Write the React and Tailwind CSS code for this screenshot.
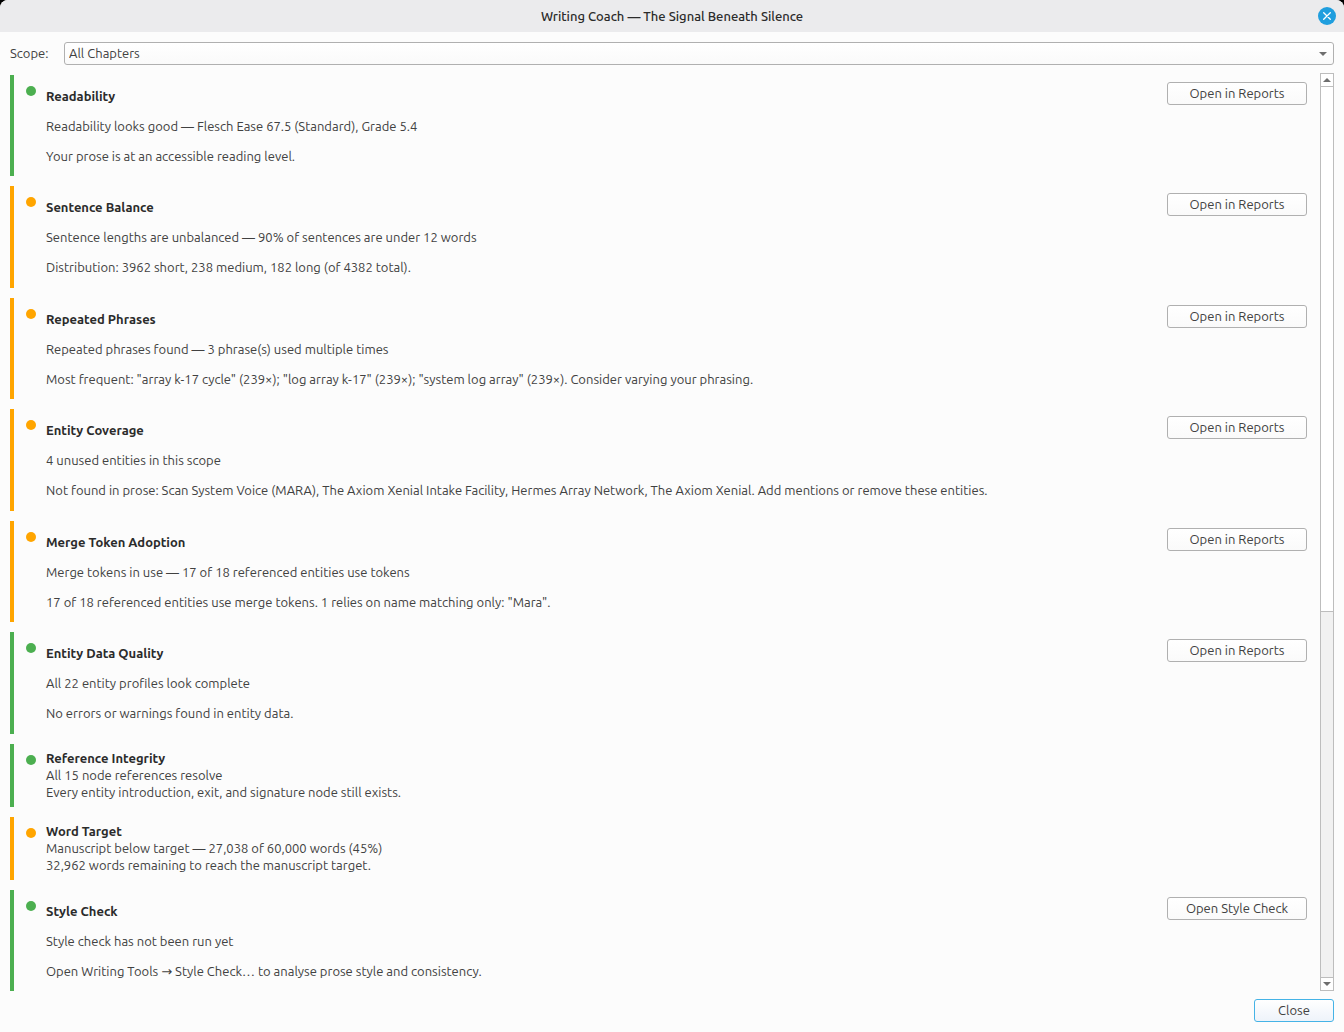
import React, { useState } from "react"

const checks = [
  {
    title: "Readability",
    status: "good",
    summary: "Readability looks good — Flesch Ease 67.5 (Standard), Grade 5.4",
    detail: "Your prose is at an accessible reading level.",
    action: "Open in Reports",
  },
  {
    title: "Sentence Balance",
    status: "warn",
    summary: "Sentence lengths are unbalanced — 90% of sentences are under 12 words",
    detail: "Distribution: 3962 short, 238 medium, 182 long (of 4382 total).",
    action: "Open in Reports",
  },
  {
    title: "Repeated Phrases",
    status: "warn",
    summary: "Repeated phrases found — 3 phrase(s) used multiple times",
    detail:
      'Most frequent: "array k-17 cycle" (239×); "log array k-17" (239×); "system log array" (239×). Consider varying your phrasing.',
    action: "Open in Reports",
  },
  {
    title: "Entity Coverage",
    status: "warn",
    summary: "4 unused entities in this scope",
    detail:
      "Not found in prose: Scan System Voice (MARA), The Axiom Xenial Intake Facility, Hermes Array Network, The Axiom Xenial. Add mentions or remove these entities.",
    action: "Open in Reports",
  },
  {
    title: "Merge Token Adoption",
    status: "warn",
    summary: "Merge tokens in use — 17 of 18 referenced entities use tokens",
    detail: '17 of 18 referenced entities use merge tokens. 1 relies on name matching only: "Mara".',
    action: "Open in Reports",
  },
  {
    title: "Entity Data Quality",
    status: "good",
    summary: "All 22 entity profiles look complete",
    detail: "No errors or warnings found in entity data.",
    action: "Open in Reports",
  },
  {
    title: "Reference Integrity",
    status: "good",
    summary: "All 15 node references resolve",
    detail: "Every entity introduction, exit, and signature node still exists.",
  },
  {
    title: "Word Target",
    status: "warn",
    summary: "Manuscript below target — 27,038 of 60,000 words (45%)",
    detail: "32,962 words remaining to reach the manuscript target.",
  },
  {
    title: "Style Check",
    status: "good",
    summary: "Style check has not been run yet",
    detail: "Open Writing Tools → Style Check… to analyse prose style and consistency.",
    action: "Open Style Check",
  },
]

function CheckCard({ check }) {
  const good = check.status === "good"

  return (
    <section
      className={`flex shrink-0 gap-[10px] border-l-4 pl-3 pr-[6px] ${
        good ? "border-[#4caf50]" : "border-[#ffa500]"
      } ${check.action ? "grow" : ""}`}
    >
      <span
        className={`mt-[11px] size-[10px] shrink-0 rounded-full ${good ? "bg-[#4caf50]" : "bg-[#ffa500]"}`}
      />
      <div
        className={`flex min-w-0 flex-1 flex-col ${check.action ? "gap-[13px] pt-[13px] pb-[11px]" : "py-[6px]"}`}
      >
        <h2 className="font-bold text-[#2b2b2b]">{check.title}</h2>
        <p>{check.summary}</p>
        <p>{check.detail}</p>
      </div>
      {check.action && (
        <button className="mt-[7px] h-[23px] w-[140px] shrink-0 rounded-[3px] border border-[#b0b0b0] bg-linear-to-b from-white to-[#fafafa]">
          {check.action}
        </button>
      )}
    </section>
  )
}

function Arrow({ up = false }) {
  return (
    <svg width="8" height="4" viewBox="0 0 8 4" fill="#6e6e6e" aria-hidden="true">
      <path d={up ? "M0 4 4 0l4 4z" : "M0 0h8L4 4z"} />
    </svg>
  )
}

function ScrollBar() {
  return (
    <div className="flex w-[14px] shrink-0 flex-col border border-[#bdbdbd] bg-[#f1f1f1]">
      <button aria-label="Scroll up" className="flex h-[13px] items-center justify-center border-b border-[#bdbdbd] bg-white">
        <Arrow up />
      </button>
      <div className="flex-1">
        <div className="h-[59%] border-b border-[#bdbdbd] bg-white" />
      </div>
      <button aria-label="Scroll down" className="flex h-[13px] items-center justify-center border-t border-[#bdbdbd] bg-white">
        <Arrow />
      </button>
    </div>
  )
}

export default function App() {
  const [scope, setScope] = useState("all")

  return (
    <div className="bg-black">
      <main className="flex h-screen flex-col overflow-hidden rounded-t-lg bg-[#fcfcfc] font-['Ubuntu','DejaVu_Sans','Noto_Sans',sans-serif] text-[13px] leading-[17px] text-[#414141]">
        {/* Title bar */}
        <header className="relative flex h-8 shrink-0 items-center justify-center bg-[#ebebed]">
          <h1 className="font-medium text-[#2b2b2b]">Writing Coach — The Signal Beneath Silence</h1>
          <button
            aria-label="Close window"
            className="absolute right-2 flex size-[18px] items-center justify-center rounded-full bg-[#1f9ede]"
          >
            <svg width="8" height="8" viewBox="0 0 8 8" stroke="white" strokeWidth="1.3" strokeLinecap="round">
              <path d="M.7.7l6.6 6.6M7.3.7L.7 7.3" />
            </svg>
          </button>
        </header>

        <div className="flex min-h-0 flex-1 flex-col gap-2 p-[10px]">
          <div className="flex shrink-0 items-center">
            <label htmlFor="scope" className="w-[54px]">
              Scope:
            </label>
            <div className="relative flex flex-1 items-center">
              <select
                id="scope"
                value={scope}
                onChange={(e) => setScope(e.target.value)}
                className="h-[23px] w-full appearance-none rounded-[3px] border border-[#b0b0b0] bg-linear-to-b from-white to-[#fafafa] px-1"
              >
                <option value="all">All Chapters</option>
              </select>
              <span className="pointer-events-none absolute right-[7px]">
                <Arrow />
              </span>
            </div>
          </div>

          {/* Results */}
          <div className="flex min-h-0 flex-1 gap-[7px]">
            <div className="flex flex-1 flex-col gap-[10px] overflow-hidden pt-[2px]">
              {checks.map((check) => (
                <CheckCard key={check.title} check={check} />
              ))}
            </div>
            <ScrollBar />
          </div>

          <button className="h-[23px] w-20 shrink-0 self-end rounded-[3px] border border-[#45b3e6] bg-linear-to-b from-white to-[#eef3fa]">
            Close
          </button>
        </div>
      </main>
    </div>
  )
}
